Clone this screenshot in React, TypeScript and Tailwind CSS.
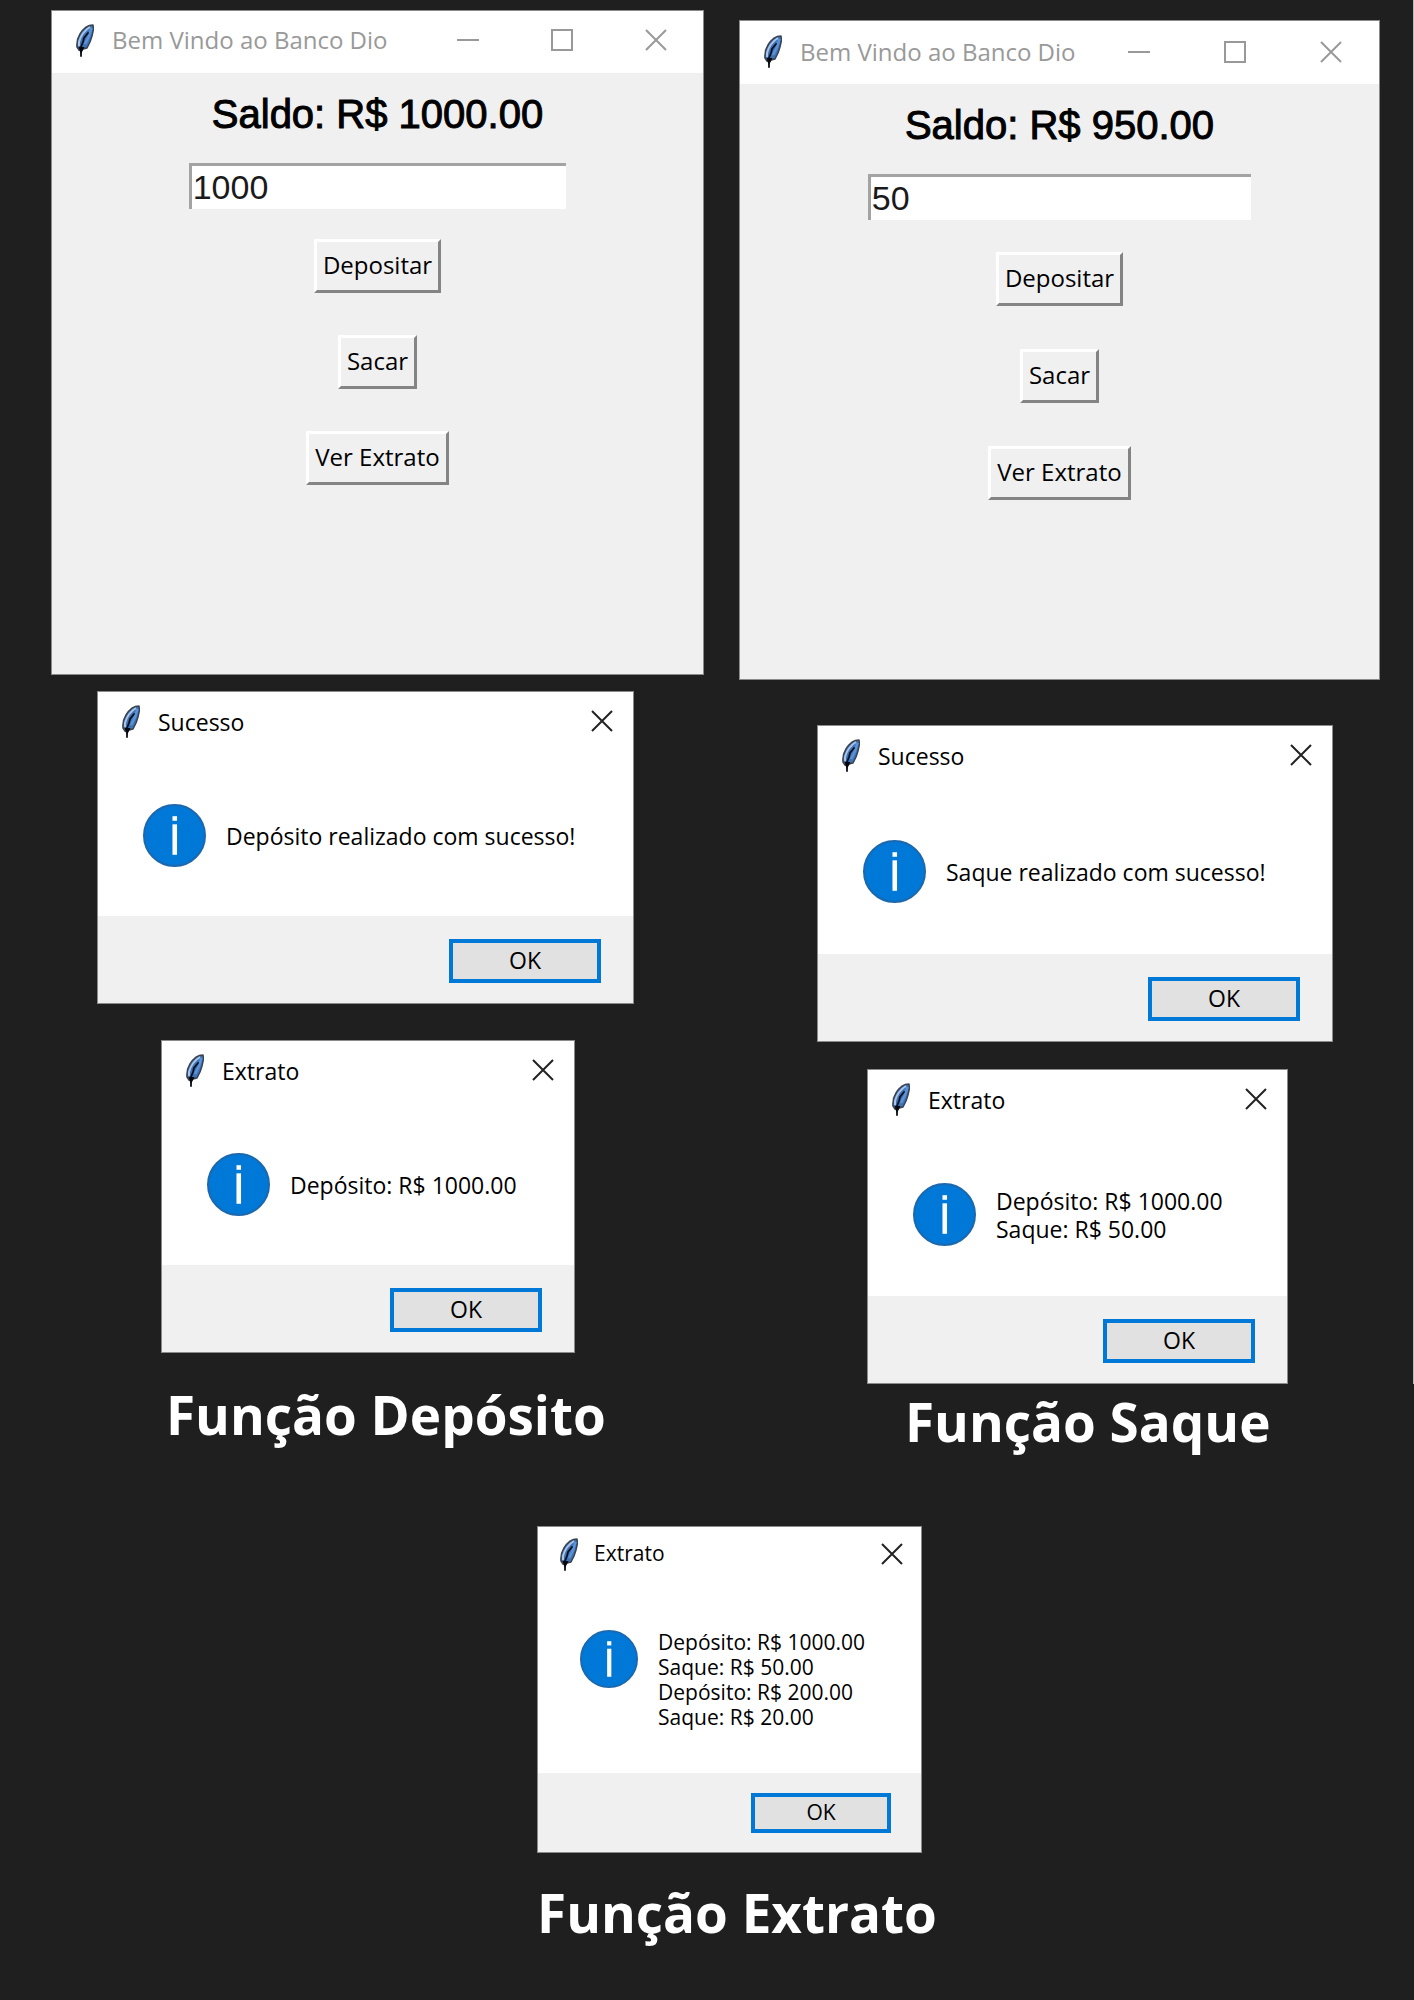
import type { ReactNode } from "react";

function Feather() {
  return (
    <svg viewBox="0 0 18 33" className="h-[33px] w-[18px] shrink-0" aria-hidden="true">
      <path d="M17 1 C12 1 7 5 4 10 C1.500 14 0.500 18 1 23 L3 26 L5 27 L7 25 L11 24 L14 18 L16 12 L17.500 5 Z" fill="#3f73b8" stroke="#39424f" strokeWidth="1.500" strokeLinejoin="round" />
      <path d="M14 3 C9 6 5 11 3 18 L3 22" stroke="#a9c4e4" strokeWidth="2" fill="none" />
      <path d="M15.500 4 L13 12 L9 20" stroke="#5b93da" strokeWidth="2.500" fill="none" />
      <path d="M12 9 L8 14 L7 18 L5 23 L5 32" stroke="#0b0f18" strokeWidth="1.800" fill="none" strokeLinecap="round" />
      <path d="M2.500 23 L5 30 L8.500 23 Z" fill="#05070c" />
    </svg>
  );
}

function CloseIcon() {
  return (
    <svg viewBox="0 0 22 22" className="size-[22px]" fill="none" stroke="currentColor" strokeWidth="2" aria-hidden="true">
      <path d="M1 1 L21 21 M21 1 L1 21" />
    </svg>
  );
}

function InfoIcon({ small }: { small?: boolean }) {
  return (
    <svg viewBox="0 0 62 62" className={small ? "size-[58px] shrink-0" : "size-[63px] shrink-0"} role="img" aria-label="Informação">
      <circle cx="31" cy="31" r="30" fill="#0078d7" stroke="#1b68ae" strokeWidth="2" />
      <rect x="29" y="12" width="4.500" height="4.500" fill="#fff" />
      <rect x="29" y="20" width="4.500" height="30" fill="#fff" />
    </svg>
  );
}

function TkButton({ children }: { children: ReactNode }) {
  return (
    <button
      type="button"
      className="h-[54px] border-3 border-t-white border-l-white border-r-[#848484] border-b-[#848484] bg-[#f0f0f0] px-1.5 pb-0.5 text-2xl leading-none text-black"
    >
      {children}
    </button>
  );
}

type BankWindowProps = {
  saldo: string;
  valor: string;
  className: string;
  header: string;
  controls: string;
  input: string;
  actions: string;
};

function BankWindow({ saldo, valor, className, header, controls, input, actions }: BankWindowProps) {
  return (
    <section className={`flex flex-col border border-[#8a8a8a] bg-[#f0f0f0] ${className}`}>
      <header className={`flex shrink-0 items-center bg-white pl-6 text-[#999] ${header}`}>
        <Feather />
        <h2 className="ml-[18px] flex-1 text-2xl whitespace-nowrap">Bem Vindo ao Banco Dio</h2>
        <div className={`flex shrink-0 items-center ${controls}`}>
          <button type="button" aria-label="Minimizar">
            <svg viewBox="0 0 22 22" className="size-[22px]" stroke="currentColor" strokeWidth="2" aria-hidden="true">
              <path d="M0 11 H22" />
            </svg>
          </button>
          <button type="button" aria-label="Maximizar">
            <svg viewBox="0 0 22 22" className="size-[22px]" fill="none" stroke="currentColor" strokeWidth="2" aria-hidden="true">
              <rect x="1" y="1" width="20" height="20" />
            </svg>
          </button>
          <button type="button" aria-label="Fechar">
            <CloseIcon />
          </button>
        </div>
      </header>
      <div className="flex flex-col items-center pt-[18px]">
        <p className="font-['Liberation_Sans',sans-serif] text-[40px] leading-[46px] text-black [-webkit-text-stroke:1px_black]">{`Saldo: R$ ${saldo}`}</p>
        <input
          aria-label="Valor"
          defaultValue={valor}
          className={`mt-[26px] h-[46px] border-t-3 border-l-3 border-[#a3a3a3] bg-white pl-px font-['Liberation_Sans',sans-serif] text-[34px] text-[#1a1a1a] outline-none ${input}`}
        />
        <div className={`flex flex-col items-center ${actions}`}>
          <TkButton>Depositar</TkButton>
          <TkButton>Sacar</TkButton>
          <TkButton>Ver Extrato</TkButton>
        </div>
      </div>
    </section>
  );
}

function MessageBox({ title, lines, className, small }: { title: string; lines: string[]; className: string; small?: boolean }) {
  return (
    <section role="dialog" aria-label={title} className={`flex max-w-full flex-col border border-[#8a8a8a] bg-white ${className}`}>
      <header className={small ? "flex h-[54px] items-center pr-[18px] pl-[22px]" : "flex h-[58px] items-center pr-5 pl-6"}>
        <Feather />
        <h2 className={small ? "ml-4 flex-1 text-[21px]" : "ml-[18px] flex-1 pt-0.5 text-[23px]"}>{title}</h2>
        <button type="button" aria-label="Fechar" className="text-[#222]">
          <CloseIcon />
        </button>
      </header>
      <div className={small ? "flex flex-1 items-start pt-[49px] pl-[42px]" : "flex flex-1 items-center pt-1 pl-[45px]"}>
        <InfoIcon small={small} />
        <div className={small ? "ml-5 text-[21px] leading-[25px]" : "ml-5 pt-0.5 text-[23px] leading-7"}>
          {lines.map((line, i) => (
            <p key={i} className="whitespace-nowrap">{line}</p>
          ))}
        </div>
      </div>
      <footer className={small ? "flex h-[79px] items-center justify-end bg-[#f0f0f0] pr-[30px]" : "flex h-[87px] items-center justify-end bg-[#f0f0f0] pt-0.5 pr-8"}>
        <button
          type="button"
          className={small ? "h-10 w-[140px] border-4 border-[#0078d7] bg-[#e1e1e1] text-[21px] leading-none" : "h-11 w-[152px] border-4 border-[#0078d7] bg-[#e1e1e1] text-[23px] leading-none"}
        >
          OK
        </button>
      </footer>
    </section>
  );
}

function Caption({ children, className }: { children: ReactNode; className: string }) {
  return <h1 className={`text-[53px] leading-[72px] font-bold whitespace-nowrap text-white ${className}`}>{children}</h1>;
}

export default function App() {
  return (
    <main className="relative min-h-screen bg-[#1f1f1f] font-['Open_Sans',sans-serif] text-black">
      <div className="absolute top-0 right-0 h-[1384px] w-px bg-[#bdbdbd]" aria-hidden="true" />
      <div className="grid grid-cols-[653fr_641fr] gap-[35px] pr-[34px] pl-[51px]">
        <div className="flex flex-col items-start pt-2.5">
          <BankWindow
            saldo="1000.00"
            valor="1000"
            className="h-[665px] w-full"
            header="h-[62px] pb-1"
            controls="gap-[72px] pr-9"
            input="w-[58%]"
            actions="mt-[30px] gap-[42px]"
          />
          <MessageBox title="Sucesso" lines={["Depósito realizado com sucesso!"]} className="mt-4 ml-[46px] h-[313px] w-[537px]" />
          <MessageBox title="Extrato" lines={["Depósito: R$ 1000.00"]} className="mt-9 ml-[110px] h-[313px] w-[414px]" />
          <Caption className="mt-[26px] ml-[115px]">Função Depósito</Caption>
        </div>
        <div className="flex flex-col items-start pt-5">
          <BankWindow
            saldo="950.00"
            valor="50"
            className="h-[660px] w-full"
            header="h-[63px] pb-0.5"
            controls="gap-[74px] pr-[37px]"
            input="w-[60%]"
            actions="mt-8 gap-[43px]"
          />
          <MessageBox title="Sucesso" lines={["Saque realizado com sucesso!"]} className="mt-[45px] ml-[78px] h-[317px] w-[516px]" />
          <MessageBox title="Extrato" lines={["Depósito: R$ 1000.00", "Saque: R$ 50.00"]} className="mt-[27px] ml-[128px] h-[315px] w-[421px]" />
          <Caption className="mt-0.5 ml-[166px]">Função Saque</Caption>
        </div>
      </div>
      <div className="flex justify-center pt-[68px] pb-7 pl-[60px]">
        <div className="flex flex-col items-start">
          <MessageBox
            small
            title="Extrato"
            lines={["Depósito: R$ 1000.00", "Saque: R$ 50.00", "Depósito: R$ 200.00", "Saque: R$ 20.00"]}
            className="h-[327px] w-[385px]"
          />
          <Caption className="mt-6">Função Extrato</Caption>
        </div>
      </div>
    </main>
  );
}
